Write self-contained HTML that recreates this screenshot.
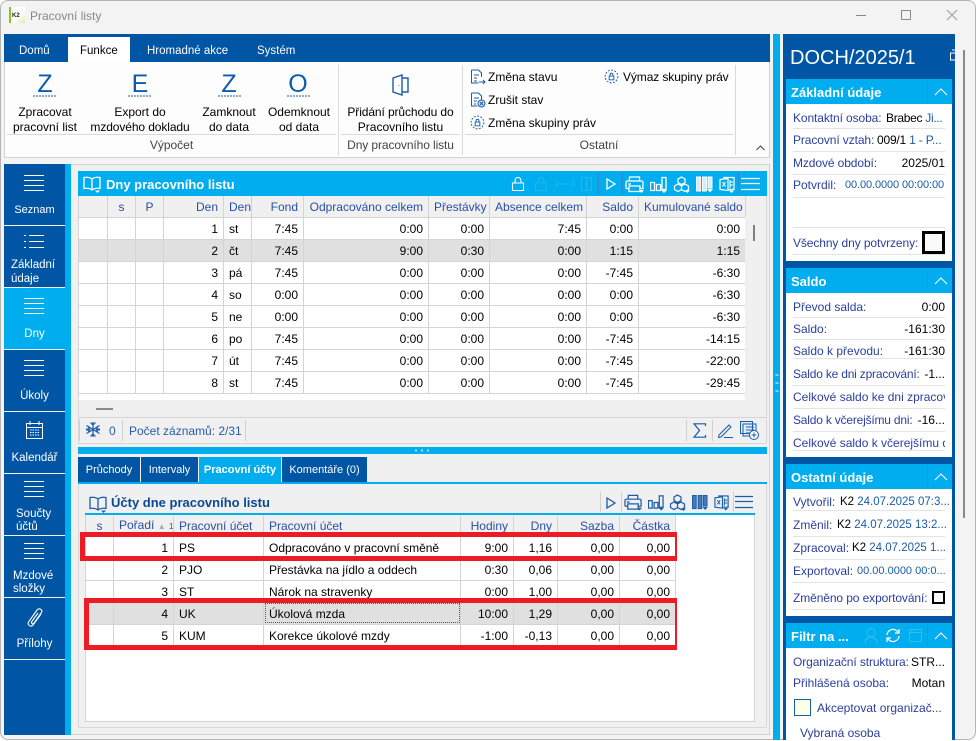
<!DOCTYPE html>
<html lang="cs"><head><meta charset="utf-8"><title>Pracovní listy</title>
<style>
*{box-sizing:border-box}
html,body{margin:0;padding:0;background:#fff}
body{width:976px;height:740px;position:relative;overflow:hidden;font:12px/16px "Liberation Sans",sans-serif;color:#000}
.a{position:absolute}
.t{position:absolute;white-space:nowrap;line-height:16px}
.c{text-align:center}
.w{color:#fff}
.l{color:#2a3f9e}
.b{color:#1a5ca8}
.r{text-align:right}
.s{font-size:11.5px}
svg.a{overflow:visible}
.grid{position:absolute;border-collapse:collapse;table-layout:fixed;font-size:12px;background:#fff}
.grid td,.grid th{height:22px;padding:2px 5px 0;border:1px solid #d4d4d4;text-align:right;font-weight:normal;white-space:nowrap;overflow:hidden;line-height:16px}
.grid th{background:#f0f0f0;color:#2a4fa3;border-top:0;height:21px}
.grid .lf{text-align:left}
.grid th.ct{text-align:center}
.sel td{background:#e0e0e0}
.nav{position:absolute;left:4px;width:61px;height:61px;background:#0055a5;color:#fff}
.ln{position:absolute;height:1px;background:#e3e3e3}
.hd{position:absolute;left:786px;width:166px;height:25px;background:#00aeef;color:#fff;font-weight:bold;font-size:13px}
.hd span{position:absolute;left:5px;top:6px;white-space:nowrap}
.hd i{position:absolute;left:141px;top:2px;width:1px;height:21px;background:#2a8fd0}
.hd svg{position:absolute;left:148px;top:9px}
.bd{position:absolute;left:786px;width:166px;background:#fff}
</style></head><body>
<svg width="0" height="0" style="position:absolute"><defs>
<symbol id="ham" viewBox="0 0 20 16"><path d="M0 .5h20M0 5.500h20M0 10.500h20M0 15.500h20" stroke="#fff" fill="none"/></symbol>
<symbol id="print" viewBox="0 0 19 17"><path d="M4.500 5V1h10v4M1 12.500V6.500a1.500 1.500 0 0 1 1.500-1.500h14a1.500 1.500 0 0 1 1.500 1.500v6h-3M4 12.500H1M4 10h11v5.500H4zM3 8h3" fill="none" stroke="currentColor" stroke-width="1.300"/><path d="M14 14h5l-2.500 3z" fill="currentColor"/></symbol>
<symbol id="chart" viewBox="0 0 17 17"><path d="M.5 6.500h4v8h-4zM6.500 8.500h4v6h-4zM12 1.500h4v12h-4z" fill="none" stroke="currentColor" stroke-width="1.300"/><path d="M11 14h6l-3 3z" fill="currentColor"/></symbol>
<symbol id="cube" viewBox="0 0 17 17"><path d="M8.500 1l3.500 2v3.500L8.500 8.500 5 6.500V3zM5 8l3.500 2v3.500L5 15.500 1.500 13.500V10zM12 8l3.500 2v3.500L12 15.500 8.500 13.500V10z" fill="none" stroke="currentColor" stroke-width="1.200"/><path d="M12 14.500h5l-2.500 2.500z" fill="currentColor"/></symbol>
<symbol id="cols" viewBox="0 0 17 17"><path d="M.5 1h4v14h-4zM6.500 1h4v14h-4zM12 1h4v11h-4z" fill="currentColor" stroke="currentColor" fill-opacity=".8"/><path d="M11 13h6l-3 3.500z" fill="currentColor"/></symbol>
<symbol id="xls" viewBox="0 0 17 17"><path d="M5 3.500V1.500h10v12H9M1 3.500l8-1v12l-8-1z" fill="none" stroke="currentColor" stroke-width="1.200"/><path d="M3.500 6l3 4.500M6.500 6l-3 4.500M11 4v8M11 6h3M11 9h3" stroke="currentColor" fill="none"/><path d="M10 14.500h5l-2.500 2.500z" fill="currentColor"/></symbol>
<symbol id="play" viewBox="0 0 10 12"><path d="M1 1l8 5-8 5z" fill="none" stroke="currentColor" stroke-width="1.300"/></symbol>
<symbol id="book" viewBox="0 0 18 17"><path d="M9 3C7 1.500 4 1 1 1.500v11c3-.5 6 0 8 1.500 2-1.500 5-2 8-1.500v-11C14 1 11 1.500 9 3zM9 3v11" fill="none" stroke="currentColor" stroke-width="1.300"/><path d="M12 14.500h5L14.500 17z" fill="currentColor"/></symbol>
<symbol id="up" viewBox="0 0 14 8"><path d="M1 7l6-6 6 6" fill="none" stroke="#fff" stroke-width="1.100"/></symbol>
<symbol id="lockc" viewBox="0 0 16 16"><circle cx="8" cy="8" r="6.800" fill="none" stroke="#1a5ca8" stroke-dasharray="2 1.500"/><path d="M5.500 7.500h5v4h-5zM6.500 7.500V6a1.500 1.500 0 0 1 3 0v1.500" fill="none" stroke="#1a5ca8"/></symbol>
</defs></svg>

<!-- window -->
<div class="a" style="left:0;top:0;width:976px;height:740px;background:#f3f3f3;border:1px solid #b4b4b4;border-radius:8px"></div>
<div class="a" style="left:9px;top:7px;width:16px;height:16px;background:linear-gradient(135deg,#fff 55%,#d9eba8);border-left:2px solid #7ccb1e"></div>
<div class="t" style="left:12px;top:8px;font-size:6px;font-weight:bold;color:#222">K2</div>
<div class="t" style="left:30px;top:8px;color:#888">Pracovní listy</div>
<div class="a" style="left:856px;top:15px;width:10px;height:1px;background:#888"></div>
<div class="a" style="left:901px;top:10px;width:10px;height:10px;border:1px solid #888;border-radius:1px"></div>
<svg class="a" style="left:947px;top:10px" width="10" height="10"><path d="M0 0l10 10M10 0L0 10" stroke="#999"/></svg>

<!-- ribbon -->
<div class="a" style="left:4px;top:34px;width:766px;height:28px;background:#0055a5"></div>
<div class="a" style="left:68px;top:37px;width:62px;height:25px;background:#fff"></div>
<div class="t w" style="left:19px;top:43px;font-size:11.500px">Domů</div>
<div class="t" style="left:80px;top:43px;font-size:11.500px">Funkce</div>
<div class="t w" style="left:147px;top:43px;font-size:11.500px">Hromadné akce</div>
<div class="t w" style="left:257px;top:43px;font-size:11.500px">Systém</div>
<div class="a" style="left:4px;top:62px;width:766px;height:96px;background:#fdfdfd;border:1px solid #d2d2d2;border-top:0"></div>
<div class="a" style="left:338px;top:65px;width:1px;height:90px;background:#d8d8d8"></div>
<div class="a" style="left:462px;top:65px;width:1px;height:90px;background:#d8d8d8"></div>
<div class="a" style="left:735px;top:65px;width:1px;height:90px;background:#d8d8d8"></div>
<div class="a" style="left:7px;top:134px;width:329px;height:1px;background:#d8d8d8"></div>
<div class="a" style="left:341px;top:134px;width:119px;height:1px;background:#d8d8d8"></div>
<div class="a" style="left:465px;top:134px;width:268px;height:1px;background:#d8d8d8"></div>

<div class="t c" style="left:25px;top:71px;width:40px;font-size:25px;line-height:26px;color:#0f5cab">Z</div>
<div class="t c" style="left:120px;top:71px;width:40px;font-size:25px;line-height:26px;color:#0f5cab">E</div>
<div class="t c" style="left:209px;top:71px;width:40px;font-size:25px;line-height:26px;color:#0f5cab">Z</div>
<div class="t c" style="left:278px;top:71px;width:40px;font-size:25px;line-height:26px;color:#0f5cab">O</div>
<svg class="a" style="left:0;top:95px" width="320" height="3"><path d="M33 1h24M128 1h24M218 1h24M287 1h24" stroke="#1a5ca8" stroke-dasharray="2 1"/></svg>

<div class="t c" style="left:5px;top:104px;width:80px">Zpracovat</div>
<div class="t c" style="left:5px;top:119px;width:80px">pracovní list</div>
<div class="t c" style="left:85px;top:104px;width:110px">Export do</div>
<div class="t c" style="left:85px;top:119px;width:110px;letter-spacing:-.1px">mzdového dokladu</div>
<div class="t c" style="left:199px;top:104px;width:60px">Zamknout</div>
<div class="t c" style="left:199px;top:119px;width:60px">do data</div>
<div class="t c" style="left:264px;top:104px;width:70px">Odemknout</div>
<div class="t c" style="left:264px;top:119px;width:70px">od data</div>
<div class="t c" style="left:340px;top:104px;width:121px;letter-spacing:-.1px">Přidání průchodu do</div>
<div class="t c" style="left:340px;top:119px;width:121px">Pracovního listu</div>
<div class="t c" style="left:7px;top:137px;width:329px;color:#444">Výpočet</div>
<div class="t c" style="left:340px;top:137px;width:121px;color:#444;letter-spacing:-.1px">Dny pracovního listu</div>
<div class="t c" style="left:465px;top:137px;width:268px;color:#444">Ostatní</div>

<svg class="a" style="left:392px;top:74px" width="18" height="22" viewBox="0 0 18 22"><path d="M1 4l9-3v20l-9-3zM10 4h6v14h-6M7 11v.5" fill="none" stroke="#1a5ca8" stroke-width="1.400"/></svg>
<svg class="a" style="left:470px;top:69px" width="16" height="16" viewBox="0 0 16 16"><path d="M1.500 1h7l3 3v4M1.500 1v13h7M4 6h5M4 9h3M4 12h3M9 13h6M13 11l2 2-2 2" fill="none" stroke="#1a5ca8"/></svg>
<svg class="a" style="left:470px;top:92px" width="16" height="16" viewBox="0 0 16 16"><path d="M1.500 1h7l3 3v4M1.500 1v13h6M4 6h5M4 9h3M4 12h2" fill="none" stroke="#1a5ca8"/><circle cx="11.500" cy="11.500" r="3.500" fill="#cfe2f5" stroke="#1a5ca8"/><path d="M10 10l3 3M13 10l-3 3" stroke="#1a5ca8"/></svg>
<svg class="a" style="left:470px;top:115px" width="15" height="15"><use href="#lockc"/></svg>
<svg class="a" style="left:604px;top:69px" width="15" height="15"><use href="#lockc"/></svg>
<div class="t" style="left:488px;top:69px">Změna stavu</div>
<div class="t" style="left:488px;top:92px">Zrušit stav</div>
<div class="t" style="left:488px;top:115px">Změna skupiny práv</div>
<div class="t" style="left:623px;top:69px;letter-spacing:-.1px">Výmaz skupiny práv</div>
<svg class="a" style="left:756px;top:145px" width="9" height="6"><path d="M.5 5L4.500 1l4 4" stroke="#444" fill="none"/></svg>

<!-- main frame -->
<div class="a" style="left:71px;top:164px;width:699px;height:571px;background:#f0f0f0;border:1px solid #d2d2d2;border-left:0"></div>
<div class="a" style="left:65px;top:164px;width:6px;height:571px;background:#00aeef"></div>

<!-- nav -->
<div class="nav" style="top:164px"></div>
<div class="nav" style="top:226px"></div>
<div class="nav" style="top:288px;background:#00aeef"></div>
<div class="nav" style="top:350px"></div>
<div class="nav" style="top:412px"></div>
<div class="nav" style="top:474px"></div>
<div class="nav" style="top:536px"></div>
<div class="nav" style="top:598px"></div>
<div class="nav" style="top:660px;height:75px"></div>
<svg class="a" style="left:24px;top:175px" width="20" height="16"><use href="#ham"/></svg>
<svg class="a" style="left:24px;top:235px" width="20" height="13" viewBox="0 0 20 13"><path d="M5 .5h15M5 6.500h15M5 12.500h15M0 .5h2M0 6.500h2M0 12.500h2" stroke="#fff"/></svg>
<svg class="a" style="left:24px;top:298px" width="20" height="16"><use href="#ham"/></svg>
<svg class="a" style="left:24px;top:360px" width="20" height="16"><use href="#ham"/></svg>
<svg class="a" style="left:26px;top:421px" width="17" height="18" viewBox="0 0 17 18"><path d="M.5 2.500h16v15H.5zM.5 6.500h16M4 0v4M13 0v4" fill="none" stroke="#fff"/><path d="M4 9h9M4 11.500h9M4 14h9" stroke="#fff" stroke-dasharray="1.500 1"/></svg>
<svg class="a" style="left:24px;top:481px" width="20" height="16"><use href="#ham"/></svg>
<svg class="a" style="left:24px;top:543px" width="20" height="16"><use href="#ham"/></svg>
<svg class="a" style="left:26px;top:607px" width="18" height="22" viewBox="0 0 18 22"><path d="M15 7L7 18c-2 2.500-6 0-4.500-3L11 3c2-2.500 6-.5 4.500 2.500L8 16c-1 1.500-3 .5-2.500-1L12 6" fill="none" stroke="#fff" stroke-width="1.100"/></svg>
<div class="t w c" style="left:4px;top:202px;width:61px;font-size:11px">Seznam</div>
<div class="t w" style="left:11px;top:258px;font-size:11.500px;line-height:14px">Základní<br>údaje</div>
<div class="t w c" style="left:4px;top:326px;width:61px;font-size:11.500px">Dny</div>
<div class="t w c" style="left:4px;top:388px;width:61px;font-size:11.500px">Úkoly</div>
<div class="t w c" style="left:4px;top:450px;width:61px;font-size:11.500px">Kalendář</div>
<div class="t w" style="left:16px;top:508px;font-size:11.500px;line-height:13px">Součty<br>účtů</div>
<div class="t w" style="left:13px;top:570px;font-size:11.500px;line-height:13px">Mzdové<br>složky</div>
<div class="t w c" style="left:4px;top:636px;width:61px;font-size:11.500px">Přílohy</div>

<!-- upper grid -->
<div class="a" style="left:78px;top:171px;width:689px;height:273px;border:1px solid #d8d8d8;border-top:0;background:#f0f0f0"></div>
<div class="a" style="left:78px;top:171px;width:689px;height:25px;background:#00aeef"></div>
<svg class="a" style="left:83px;top:176px;color:#fff" width="18" height="17"><use href="#book"/></svg>
<div class="t w" style="left:106px;top:177px;font-weight:bold;font-size:13px">Dny pracovního listu</div>
<svg class="a" style="left:512px;top:177px" width="12" height="14" viewBox="0 0 12 14"><path d="M.5 6h11v7.500H.5zM3 6V3.500a3 3 0 0 1 6 0V6" fill="none" stroke="#fff" stroke-width="1.100"/></svg>
<svg class="a" style="left:535px;top:177px" width="12" height="14" viewBox="0 0 12 14" opacity=".35"><path d="M.5 6h11v7.500H.5zM3 6V3.500a3 3 0 0 1 6 0V6" fill="none" stroke="#5cc6ee"/></svg>
<svg class="a" style="left:556px;top:179px" width="18" height="10" opacity=".4"><path d="M.5 1v8M17.500 1v8M1 5h16" stroke="#5cc6ee" stroke-dasharray="3 1"/></svg>
<svg class="a" style="left:581px;top:177px" width="11" height="14" opacity=".4"><path d="M.5.500h10v13H.5zM5.500 0v14" fill="none" stroke="#5cc6ee"/></svg>
<div class="a" style="left:598px;top:173px;width:1px;height:21px;background:#2a8fd0"></div>
<div class="a" style="left:622px;top:173px;width:1px;height:21px;background:#2a8fd0"></div>
<div class="a" style="left:738px;top:173px;width:1px;height:21px;background:#2a8fd0"></div>
<svg class="a" style="left:606px;top:178px;color:#fff" width="10" height="12"><use href="#play"/></svg>
<svg class="a" style="left:625px;top:176px;color:#fff" width="19" height="17"><use href="#print"/></svg>
<svg class="a" style="left:650px;top:176px;color:#fff" width="17" height="17"><use href="#chart"/></svg>
<svg class="a" style="left:673px;top:176px;color:#fff" width="17" height="17"><use href="#cube"/></svg>
<svg class="a" style="left:696px;top:176px;color:#fff" width="17" height="17"><use href="#cols"/></svg>
<svg class="a" style="left:719px;top:176px;color:#fff" width="17" height="17"><use href="#xls"/></svg>
<svg class="a" style="left:741px;top:178px" width="19" height="12"><path d="M0 .5h19M0 5.500h19M0 11.500h19" stroke="#fff" stroke-width="1.200"/></svg>

<table class="grid" style="left:78px;top:196px;width:667px">
<colgroup><col style="width:29px"><col style="width:28px"><col style="width:28px"><col style="width:60px"><col style="width:28px"><col style="width:52px"><col style="width:125px"><col style="width:61px"><col style="width:97px"><col style="width:52px"><col style="width:107px"></colgroup>
<tr><th></th><th class="ct">s</th><th class="ct">P</th><th>Den</th><th class="lf">Den</th><th>Fond</th><th>Odpracováno celkem</th><th>Přestávky</th><th>Absence celkem</th><th>Saldo</th><th>Kumulované saldo</th></tr>
<tr><td></td><td></td><td></td><td>1</td><td class="lf">st</td><td>7:45</td><td>0:00</td><td>0:00</td><td>7:45</td><td>0:00</td><td>0:00</td></tr>
<tr class="sel"><td></td><td></td><td></td><td>2</td><td class="lf">čt</td><td>7:45</td><td>9:00</td><td>0:30</td><td>0:00</td><td>1:15</td><td>1:15</td></tr>
<tr><td></td><td></td><td></td><td>3</td><td class="lf">pá</td><td>7:45</td><td>0:00</td><td>0:00</td><td>0:00</td><td>-7:45</td><td>-6:30</td></tr>
<tr><td></td><td></td><td></td><td>4</td><td class="lf">so</td><td>0:00</td><td>0:00</td><td>0:00</td><td>0:00</td><td>0:00</td><td>-6:30</td></tr>
<tr><td></td><td></td><td></td><td>5</td><td class="lf">ne</td><td>0:00</td><td>0:00</td><td>0:00</td><td>0:00</td><td>0:00</td><td>-6:30</td></tr>
<tr><td></td><td></td><td></td><td>6</td><td class="lf">po</td><td>7:45</td><td>0:00</td><td>0:00</td><td>0:00</td><td>-7:45</td><td>-14:15</td></tr>
<tr><td></td><td></td><td></td><td>7</td><td class="lf">út</td><td>7:45</td><td>0:00</td><td>0:00</td><td>0:00</td><td>-7:45</td><td>-22:00</td></tr>
<tr><td></td><td></td><td></td><td>8</td><td class="lf">st</td><td>7:45</td><td>0:00</td><td>0:00</td><td>0:00</td><td>-7:45</td><td>-29:45</td></tr>
</table>
<div class="a" style="left:79px;top:394px;width:666px;height:6px;background:#fff"></div>
<div class="a" style="left:745px;top:217px;width:21px;height:183px;background:#f0f0f0"></div>
<div class="a" style="left:753px;top:225px;width:2px;height:16px;background:#808080"></div>
<div class="a" style="left:96px;top:408px;width:17px;height:2px;background:#8a8a8a"></div>
<div class="a" style="left:79px;top:417px;width:687px;height:1px;background:#d4d4d4"></div>
<div class="a" style="left:79px;top:420px;width:1px;height:21px;background:#d0d0d0"></div>
<div class="a" style="left:122px;top:420px;width:1px;height:21px;background:#d0d0d0"></div>
<div class="a" style="left:245px;top:420px;width:1px;height:21px;background:#d0d0d0"></div>
<div class="a" style="left:686px;top:420px;width:1px;height:21px;background:#d0d0d0"></div>
<div class="a" style="left:712px;top:420px;width:1px;height:21px;background:#d0d0d0"></div>
<svg class="a" style="left:85px;top:421px" width="16" height="17" viewBox="0 0 16 17"><path d="M8 1v15M1.500 4.500l13 8M14.500 4.500l-13 8M5.500 1.500L8 4l2.500-2.500M5.500 15.500L8 13l2.500 2.500M1 8l3.500.5L3 5M15 8l-3.500.5L13 5M1 9l3.500-.5L3 12M15 9l-3.500-.5L13 12" fill="none" stroke="#1a5ca8" stroke-width="1.200"/></svg>
<div class="t" style="left:109px;top:423px;color:#2a5aa8">0</div>
<div class="t" style="left:129px;top:423px;color:#2a5aa8">Počet záznamů: 2/31</div>
<svg class="a" style="left:693px;top:423px" width="13" height="15"><path d="M12.500 3V.8H1l5.500 6.700L1 14.200h11.500V12" fill="none" stroke="#1a5ca8" stroke-width="1.200"/></svg>
<svg class="a" style="left:718px;top:423px" width="15" height="15"><path d="M1 12L11 2l2 2L3 14l-2.500.5zM6 14.500h9" fill="none" stroke="#1a5ca8"/></svg>
<svg class="a" style="left:740px;top:421px" width="20" height="20"><path d="M.5.500h12v12H.5zM3 3h13v12H3zM6 6h8M6 9h8M6 12h4" fill="#e4edf7" stroke="#1a5ca8"/><circle cx="14" cy="14" r="4.500" fill="#fff" stroke="#1a5ca8"/><path d="M14 11.500v5M11.500 14h5" stroke="#1a5ca8"/></svg>

<!-- splitter -->
<div class="a" style="left:78px;top:447px;width:689px;height:7px;background:#00aeef"></div>
<svg class="a" style="left:414px;top:449px" width="18" height="3"><path d="M1 1.500h2M7 1.500h2M13 1.500h2" stroke="#a8dcf5" stroke-width="2"/></svg>

<!-- tabs -->
<div class="a" style="left:78px;top:457px;width:62px;height:25px;background:#0055a5"></div>
<div class="a" style="left:141px;top:457px;width:57px;height:25px;background:#0055a5"></div>
<div class="a" style="left:199px;top:457px;width:82px;height:25px;background:#00aeef"></div>
<div class="a" style="left:282px;top:457px;width:85px;height:25px;background:#0055a5"></div>
<div class="a" style="left:78px;top:482px;width:689px;height:2px;background:#00aeef"></div>
<div class="t w c" style="left:78px;top:462px;width:62px;font-size:11px">Průchody</div>
<div class="t w c" style="left:141px;top:462px;width:57px;font-size:11px">Intervaly</div>
<div class="t w c" style="left:199px;top:462px;width:82px;font-size:11px;font-weight:bold">Pracovní účty</div>
<div class="t w c" style="left:282px;top:462px;width:85px;font-size:11px">Komentáře (0)</div>

<!-- lower -->
<div class="a" style="left:78px;top:484px;width:689px;height:244px;border:1px solid #d8d8d8;border-top:0"></div>
<svg class="a" style="left:89px;top:496px;color:#1a5ca8" width="18" height="17"><use href="#book"/></svg>
<div class="t" style="left:111px;top:495px;font-weight:bold;font-size:13px;color:#0a4a94">Účty dne pracovního listu</div>
<div class="a" style="left:600px;top:492px;width:1px;height:20px;background:#d0d0d0"></div>
<div class="a" style="left:621px;top:492px;width:1px;height:20px;background:#d0d0d0"></div>
<div class="a" style="left:733px;top:492px;width:1px;height:20px;background:#d0d0d0"></div>
<svg class="a" style="left:606px;top:497px;color:#1a5ca8" width="10" height="12"><use href="#play"/></svg>
<svg class="a" style="left:624px;top:494px;color:#1a5ca8" width="18" height="17"><use href="#print"/></svg>
<svg class="a" style="left:648px;top:494px;color:#1a5ca8" width="16" height="17"><use href="#chart"/></svg>
<svg class="a" style="left:669px;top:494px;color:#1a5ca8" width="17" height="17"><use href="#cube"/></svg>
<svg class="a" style="left:692px;top:494px;color:#1a5ca8" width="16" height="17"><use href="#cols"/></svg>
<svg class="a" style="left:714px;top:494px;color:#1a5ca8" width="16" height="17"><use href="#xls"/></svg>
<svg class="a" style="left:735px;top:496px" width="18" height="12"><path d="M0 .5h18M0 5.500h18M0 11.500h18" stroke="#1a5ca8" stroke-width="1.200"/></svg>
<div class="a" style="left:85px;top:513px;width:670px;height:2px;background:#00aeef"></div>
<div class="a" style="left:85px;top:515px;width:670px;height:207px;background:#fff;border:1px solid #d4d4d4;border-top:0"></div>
<table class="grid" style="left:85px;top:515px;width:590px">
<colgroup><col style="width:28px"><col style="width:60px"><col style="width:90px"><col style="width:197px"><col style="width:53px"><col style="width:44px"><col style="width:62px"><col style="width:56px"></colgroup>
<tr><th class="ct">s</th><th class="lf">Pořadí <span style="color:#aaa;font-size:8px">▲</span> <span style="font-size:8px">1</span></th><th class="lf">Pracovní účet</th><th class="lf">Pracovní účet</th><th>Hodiny</th><th>Dny</th><th>Sazba</th><th>Částka</th></tr>
<tr><td></td><td>1</td><td class="lf">PS</td><td class="lf">Odpracováno v pracovní směně</td><td>9:00</td><td>1,16</td><td>0,00</td><td>0,00</td></tr>
<tr><td></td><td>2</td><td class="lf">PJO</td><td class="lf">Přestávka na jídlo a oddech</td><td>0:30</td><td>0,06</td><td>0,00</td><td>0,00</td></tr>
<tr><td></td><td>3</td><td class="lf">ST</td><td class="lf">Nárok na stravenky</td><td>0:00</td><td>1,00</td><td>0,00</td><td>0,00</td></tr>
<tr class="sel"><td></td><td>4</td><td class="lf">UK</td><td class="lf" style="outline:1px dotted #555;outline-offset:-2px">Úkolová mzda</td><td>10:00</td><td>1,29</td><td>0,00</td><td>0,00</td></tr>
<tr><td></td><td>5</td><td class="lf">KUM</td><td class="lf">Korekce úkolové mzdy</td><td>-1:00</td><td>-0,13</td><td>0,00</td><td>0,00</td></tr>
</table>
<div class="a" style="left:80px;top:532px;width:597px;height:29px;border:5px solid #ed1c24;border-right-width:2px"></div>
<div class="a" style="left:84px;top:598px;width:593px;height:52px;border:5px solid #ed1c24;border-right-width:2px"></div>

<!-- right side -->
<div class="a" style="left:773px;top:34px;width:7px;height:706px;background:#00aeef"></div>
<svg class="a" style="left:775px;top:373px" width="4" height="20"><path d="M2 1v2M2 9v2M2 17v2" stroke="#7fd0f5" stroke-width="3"/></svg>
<div class="a" style="left:783px;top:34px;width:172px;height:706px;background:#0055a5"></div>
<div class="a" style="left:963px;top:50px;width:2px;height:468px;background:#8a8a8a"></div>
<div class="t w" style="left:790px;top:46px;font-size:20px;line-height:24px">DOCH/2025/1</div>
<svg class="a" style="left:950px;top:50px" width="5" height="11"><path d="M5 3H.5v7H5M2 0h3" fill="none" stroke="#fff"/></svg>

<div class="hd" style="top:79px"><span>Základní údaje</span><i></i><svg width="14" height="8"><use href="#up"/></svg></div>
<div class="bd" style="top:104px;height:157px"></div>
<div class="t l" style="left:793px;top:110px;letter-spacing:-.1px">Kontaktní osoba:</div><div class="t" style="left:886px;top:110px;letter-spacing:-.3px">Brabec <span class="b">Ji...</span></div>
<div class="ln" style="left:793px;top:128px;width:152px"></div>
<div class="t l" style="left:793px;top:132px;letter-spacing:-.1px">Pracovní vztah:</div><div class="t" style="left:877px;top:132px;letter-spacing:-.2px">009/1 <span class="b">1 - P...</span></div>
<div class="ln" style="left:793px;top:151px;width:152px"></div>
<div class="t l" style="left:793px;top:155px;letter-spacing:-.1px">Mzdové období:</div><div class="t r" style="left:885px;top:155px;width:60px">2025/01</div>
<div class="ln" style="left:793px;top:174px;width:152px"></div>
<div class="t l" style="left:793px;top:177px">Potvrdil:</div><div class="t b" style="left:845px;top:177px;font-size:11px;letter-spacing:-.1px">00.00.0000 00:00:00</div>
<div class="ln" style="left:793px;top:197px;width:152px"></div>
<div class="ln" style="left:793px;top:227px;width:152px"></div>
<div class="t l" style="left:793px;top:235px;letter-spacing:-.1px">Všechny dny potvrzeny:</div>
<div class="a" style="left:922px;top:231px;width:23px;height:23px;border:3px solid #000;background:#fafafa"></div>
<div class="ln" style="left:793px;top:254px;width:152px"></div>

<div class="hd" style="top:268px"><span>Saldo</span><i></i><svg width="14" height="8"><use href="#up"/></svg></div>
<div class="bd" style="top:293px;height:164px"></div>
<div class="t l" style="left:793px;top:299px">Převod salda:</div><div class="t r" style="left:885px;top:299px;width:60px">0:00</div>
<div class="ln" style="left:793px;top:317px;width:152px"></div>
<div class="t l" style="left:793px;top:321px">Saldo:</div><div class="t r" style="left:885px;top:321px;width:60px">-161:30</div>
<div class="ln" style="left:793px;top:339px;width:152px"></div>
<div class="t l" style="left:793px;top:343px">Saldo k převodu:</div><div class="t r" style="left:885px;top:343px;width:60px">-161:30</div>
<div class="ln" style="left:793px;top:358px;width:152px"></div>
<div class="t l" style="left:793px;top:366px;letter-spacing:-.2px">Saldo ke dni zpracování:</div><div class="t r" style="left:885px;top:366px;width:60px">-1...</div>
<div class="ln" style="left:793px;top:385px;width:152px"></div>
<div class="t l" style="left:793px;top:389px;width:152px;overflow:hidden">Celkové saldo ke dni zpracování</div>
<div class="ln" style="left:793px;top:408px;width:152px"></div>
<div class="t l" style="left:793px;top:412px;letter-spacing:-.2px">Saldo k včerejšímu dni:</div><div class="t r" style="left:885px;top:412px;width:60px">-16...</div>
<div class="ln" style="left:793px;top:431px;width:152px"></div>
<div class="t l" style="left:793px;top:435px;width:152px;overflow:hidden">Celkové saldo k včerejšímu dni</div>
<div class="ln" style="left:793px;top:450px;width:152px"></div>

<div class="hd" style="top:464px"><span>Ostatní údaje</span><i></i><svg width="14" height="8"><use href="#up"/></svg></div>
<div class="bd" style="top:489px;height:127px"></div>
<div class="t l" style="left:793px;top:494px">Vytvořil:</div><div class="t s" style="left:840px;top:494px">K2 <span class="b">24.07.2025 07:3...</span></div>
<div class="ln" style="left:793px;top:510px;width:152px"></div>
<div class="t l" style="left:793px;top:517px">Změnil:</div><div class="t s" style="left:837px;top:517px">K2 <span class="b">24.07.2025 13:2...</span></div>
<div class="ln" style="left:793px;top:536px;width:152px"></div>
<div class="t l" style="left:793px;top:540px">Zpracoval:</div><div class="t s" style="left:852px;top:540px">K2 <span class="b">24.07.2025 1...</span></div>
<div class="ln" style="left:793px;top:559px;width:152px"></div>
<div class="t l" style="left:793px;top:563px">Exportoval:</div><div class="t b" style="left:857px;top:563px;font-size:11px">00.00.0000 00:0...</div>
<div class="ln" style="left:793px;top:582px;width:152px"></div>
<div class="t l" style="left:793px;top:590px;letter-spacing:-.1px">Změněno po exportování:</div>
<div class="a" style="left:932px;top:591px;width:13px;height:13px;border:2px solid #000;background:#fafafa"></div>
<div class="ln" style="left:793px;top:609px;width:152px"></div>

<div class="hd" style="top:623px"><span>Filtr na ...</span><i></i><svg width="14" height="8"><use href="#up"/></svg></div>
<svg class="a" style="left:864px;top:628px" width="14" height="15" opacity=".45"><circle cx="7" cy="4.500" r="4" fill="none" stroke="#6fd0f5"/><path d="M1 15c0-4 3-6 6-6s6 2 6 6" fill="none" stroke="#6fd0f5"/></svg>
<svg class="a" style="left:886px;top:628px" width="14" height="15" viewBox="0 0 14 15"><path d="M1 7a6 6 0 0 1 10-4l2 2M13 8a6 6 0 0 1-10 4l-2-2M13 1v4H9M1 14v-4h4" fill="none" stroke="#fff" stroke-width="1.200"/></svg>
<svg class="a" style="left:909px;top:629px" width="13" height="13" opacity=".45"><path d="M.5.500h12v12H.5zM.5 3.500h12M3 .5v3" fill="none" stroke="#6fd0f5"/></svg>
<div class="bd" style="top:648px;height:92px"></div>
<div class="t l" style="left:793px;top:654px;letter-spacing:-.1px">Organizační struktura:</div><div class="t r" style="left:885px;top:654px;width:60px">STR...</div>
<div class="t l" style="left:793px;top:675px">Přihlášená osoba:</div><div class="t r" style="left:885px;top:675px;width:60px">Motan</div>
<div class="a" style="left:794px;top:699px;width:17px;height:17px;border:1px solid #1a5ca8;background:#ffffe6"></div>
<div class="t l" style="left:817px;top:700px">Akceptovat organizač...</div>
<div class="t l" style="left:800px;top:725px">Vybraná osoba</div>
</body></html>
